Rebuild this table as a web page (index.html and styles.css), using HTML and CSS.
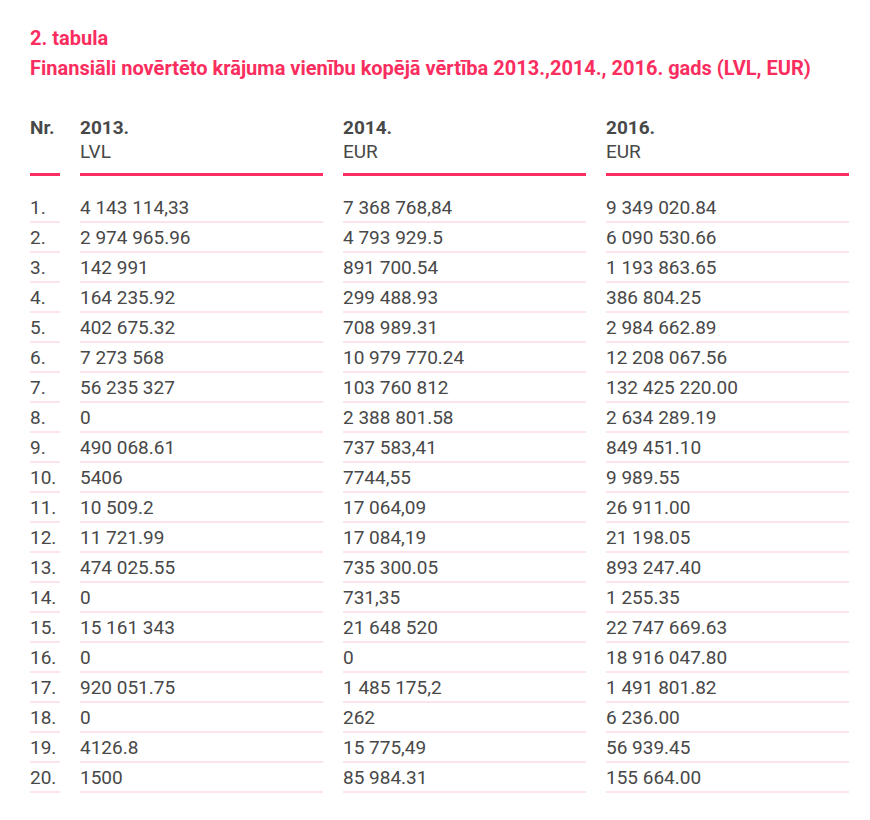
FILE: index.html
```html
<!DOCTYPE html>
<html lang="lv">
<head>
<meta charset="utf-8">
<title>2. tabula</title>
<link rel="stylesheet" href="styles.css">
</head>
<body>
<div class="page">
  <div class="caption">
    <div>2. tabula</div>
    <div>Finansiāli novērtēto krājuma vienību kopējā vērtība 2013.,2014., 2016. gads (LVL, EUR)</div>
  </div>
  <div class="grid">
    <div class="hcell"><b>Nr.</b></div>
    <div class="hcell"><b>2013.</b><br>LVL</div>
    <div class="hcell"><b>2014.</b><br>EUR</div>
    <div class="hcell"><b>2016.</b><br>EUR</div>

    <div class="cell first">1.</div><div class="cell first">4 143 114,33</div><div class="cell first">7 368 768,84</div><div class="cell first">9 349 020.84</div>
    <div class="cell">2.</div><div class="cell">2 974 965.96</div><div class="cell">4 793 929.5</div><div class="cell">6 090 530.66</div>
    <div class="cell">3.</div><div class="cell">142 991</div><div class="cell">891 700.54</div><div class="cell">1 193 863.65</div>
    <div class="cell">4.</div><div class="cell">164 235.92</div><div class="cell">299 488.93</div><div class="cell">386 804.25</div>
    <div class="cell">5.</div><div class="cell">402 675.32</div><div class="cell">708 989.31</div><div class="cell">2 984 662.89</div>
    <div class="cell">6.</div><div class="cell">7 273 568</div><div class="cell">10 979 770.24</div><div class="cell">12 208 067.56</div>
    <div class="cell">7.</div><div class="cell">56 235 327</div><div class="cell">103 760 812</div><div class="cell">132 425 220.00</div>
    <div class="cell">8.</div><div class="cell">0</div><div class="cell">2 388 801.58</div><div class="cell">2 634 289.19</div>
    <div class="cell">9.</div><div class="cell">490 068.61</div><div class="cell">737 583,41</div><div class="cell">849 451.10</div>
    <div class="cell">10.</div><div class="cell">5406</div><div class="cell">7744,55</div><div class="cell">9 989.55</div>
    <div class="cell">11.</div><div class="cell">10 509.2</div><div class="cell">17 064,09</div><div class="cell">26 911.00</div>
    <div class="cell">12.</div><div class="cell">11 721.99</div><div class="cell">17 084,19</div><div class="cell">21 198.05</div>
    <div class="cell">13.</div><div class="cell">474 025.55</div><div class="cell">735 300.05</div><div class="cell">893 247.40</div>
    <div class="cell">14.</div><div class="cell">0</div><div class="cell">731,35</div><div class="cell">1 255.35</div>
    <div class="cell">15.</div><div class="cell">15 161 343</div><div class="cell">21 648 520</div><div class="cell">22 747 669.63</div>
    <div class="cell">16.</div><div class="cell">0</div><div class="cell">0</div><div class="cell">18 916 047.80</div>
    <div class="cell">17.</div><div class="cell">920 051.75</div><div class="cell">1 485 175,2</div><div class="cell">1 491 801.82</div>
    <div class="cell">18.</div><div class="cell">0</div><div class="cell">262</div><div class="cell">6 236.00</div>
    <div class="cell">19.</div><div class="cell">4126.8</div><div class="cell">15 775,49</div><div class="cell">56 939.45</div>
    <div class="cell">20.</div><div class="cell">1500</div><div class="cell">85 984.31</div><div class="cell">155 664.00</div>
  </div>
</div>
</body>
</html>
```

FILE: styles.css
```css
html, body {
  margin: 0;
  padding: 0;
  background: #ffffff;
}
body {
  font-family: Roboto, "Liberation Sans", sans-serif;
  font-size: 19px;
  color: #484848;
}
.page {
  padding: 23px 20px 0 30px;
}
.caption {
  color: #fa2d5f;
  font-size: 20px;
  font-weight: 700;
  line-height: 30px;
}
.grid {
  margin-top: 33px;
  display: grid;
  grid-template-columns: 30px 243px 243px 243px;
  column-gap: 20px;
}
.hcell {
  line-height: 24px;
  padding-bottom: 9px;
  border-bottom: 3px solid #fb2e61;
  white-space: nowrap;
}
.hcell b {
  font-weight: 700;
}
.cell {
  line-height: 26px;
  padding-top: 2px;
  border-bottom: 2px solid #fde3ea;
  white-space: nowrap;
}
.cell.first {
  margin-top: 17px;
}
```
